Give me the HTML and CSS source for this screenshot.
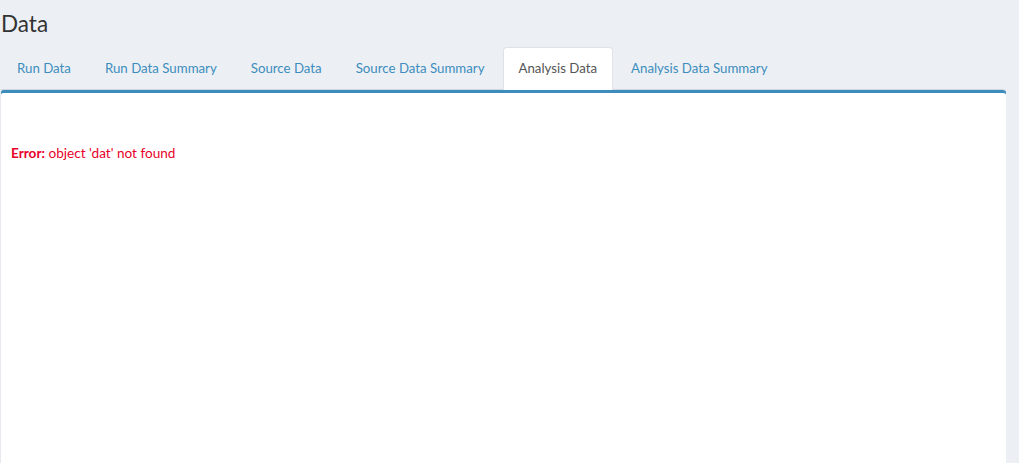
FILE: index.html
```html
<!DOCTYPE html>
<html>
<head>
<meta charset="utf-8">
<link rel="stylesheet" href="styles.css">
</head>
<body>
<div class="page">
  <h1 class="title">Data</h1>
  <ul class="tabs">
    <li class="tab"><a>Run Data</a></li>
    <li class="tab"><a>Run Data Summary</a></li>
    <li class="tab"><a>Source Data</a></li>
    <li class="tab"><a>Source Data Summary</a></li>
    <li class="tab active"><a>Analysis Data</a></li>
    <li class="tab"><a>Analysis Data Summary</a></li>
  </ul>
  <div class="box">
    <div class="error"><b>Error:</b> object 'dat' not found</div>
  </div>
</div>
</body>
</html>
```
FILE: styles.css
```css
html, body {
  margin: 0;
  padding: 0;
  height: 100%;
  background: #ecf0f5;
  font-family: "Lato", "Open Sans", sans-serif;
  overflow: hidden;
}
.page {
  display: flex;
  flex-direction: column;
  height: 100%;
  padding-right: 13px;
}
.title {
  margin: 0;
  padding: 10px 0 0 1px;
  height: 47px;
  box-sizing: border-box;
  font-size: 22.5px;
  font-weight: 400;
  color: #333;
  line-height: 28px;
}
.tabs {
  list-style: none;
  margin: 0;
  padding: 0 0 0 1px;
  display: flex;
  height: 42px;
  position: relative;
  z-index: 1;
}
.tab {
  margin-right: 2px;
}
.tab a {
  display: block;
  padding: 10px 15px;
  border: 1px solid transparent;
  border-bottom: none;
  border-radius: 4px 4px 0 0;
  font-size: 13.25px;
  line-height: 21px;
  color: #3c8dbc;
}
.tab.active a {
  background: #fff;
  border-color: #dfe3e8;
  color: #555;
  padding-bottom: 11px;
}
.box {
  flex: 1;
  background: #fff;
  border-top: 1px solid #d2d6de;
  box-shadow: inset 0 3px 0 #3c8dbc;
  border-left: 1px solid #e6e9ee;
  border-radius: 3px 3px 0 0;
  padding-top: 54px;
  padding-left: 10px;
}
.error {
  font-size: 13.6px;
  color: #e8002a;
  line-height: 18px;
}
.error b {
  font-weight: 700;
}
```
